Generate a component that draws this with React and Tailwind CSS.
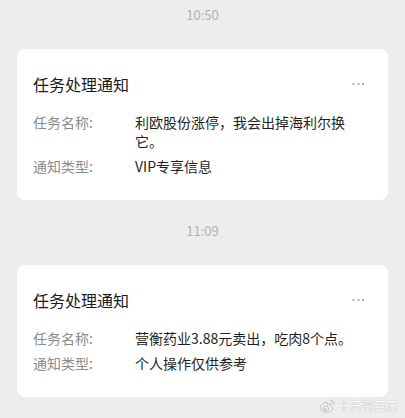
import React from 'react';

const messages = [
  {
    time: '10:50',
    title: '任务处理通知',
    rows: [
      { label: '任务名称:', value: '利欧股份涨停，我会出掉海利尔换它。' },
      { label: '通知类型:', value: 'VIP专享信息' },
    ],
  },
  {
    time: '11:09',
    title: '任务处理通知',
    rows: [
      { label: '任务名称:', value: '营衡药业3.88元卖出，吃肉8个点。' },
      { label: '通知类型:', value: '个人操作仅供参考' },
    ],
  },
];

function MoreDots() {
  return (
    <svg width="14" height="4" viewBox="0 0 14 4" className="shrink-0">
      <rect x="0.5" y="1" width="2" height="2" fill="#b0b0b0" />
      <rect x="5.5" y="1" width="2" height="2" fill="#b0b0b0" />
      <rect x="10" y="1" width="2" height="2" fill="#b0b0b0" />
    </svg>
  );
}

function WeiboLogo() {
  return (
    <svg width="17" height="14" viewBox="0 0 17 14">
      <path d="M7 3.5C3.8 4 1 6.5 1 9c0 2.6 3 4 6.2 4 3.8 0 6.3-2 6.3-3.8 0-1.3-1.2-1.8-2-2 .4-1 .3-2.3-1.5-2-1 .2-1.6.7-1.6.7.3-1.4-.5-2.8-1.4-2.4z" fill="#f2f2f2" stroke="#b8b8b8" strokeWidth="0.9" />
      <ellipse cx="6.6" cy="9.3" rx="3" ry="2.2" fill="none" stroke="#b8b8b8" strokeWidth="0.9" />
      <circle cx="6" cy="9.6" r="0.9" fill="#b8b8b8" />
      <path d="M12 1.2c2 0 3.5 1.6 3.2 3.6M11.8 3c1 0 1.7.8 1.5 1.8" fill="none" stroke="#b8b8b8" strokeWidth="0.9" strokeLinecap="round" />
    </svg>
  );
}

export default function App() {
  return (
    <div className="relative min-h-[418px] bg-[#ededed] pt-[6px] pb-[21px] px-[17px] font-['Noto_Sans_CJK_SC','Noto_Sans',sans-serif] overflow-hidden">
      {messages.map((m, i) => (
        <div key={i} className={i > 0 ? 'mt-[22px]' : ''}>
          <div className="text-center text-[13px] leading-[18px] text-[#b2b2b2]">{m.time}</div>
          <div className="mt-[25px] bg-white rounded-[8px] px-[16px] pt-[23px] pb-[24px]">
            <div className="flex items-center justify-between pr-[6px]">
              <h3 className="text-[16px] leading-[24px] text-[#1a1a1a]">{m.title}</h3>
              <MoreDots />
            </div>
            <div className="mt-[17px] flex flex-col gap-[6px]">
              {m.rows.map((r, j) => (
                <div key={j} className="flex text-[14px] leading-[19px]">
                  <span className="w-[102px] shrink-0 text-[#8c8c8c]">{r.label}</span>
                  <span className="max-w-[222px] text-[#1f1f1f]">{r.value}</span>
                </div>
              ))}
            </div>
          </div>
        </div>
      ))}

      <div className="absolute right-[7px] bottom-[5px] flex items-center gap-[2px]">
        <WeiboLogo />
        <span className="text-[12px] leading-[14px] text-white [text-shadow:0_0_1px_rgba(0,0,0,0.45)]">十万变百万</span>
      </div>
    </div>
  );
}
